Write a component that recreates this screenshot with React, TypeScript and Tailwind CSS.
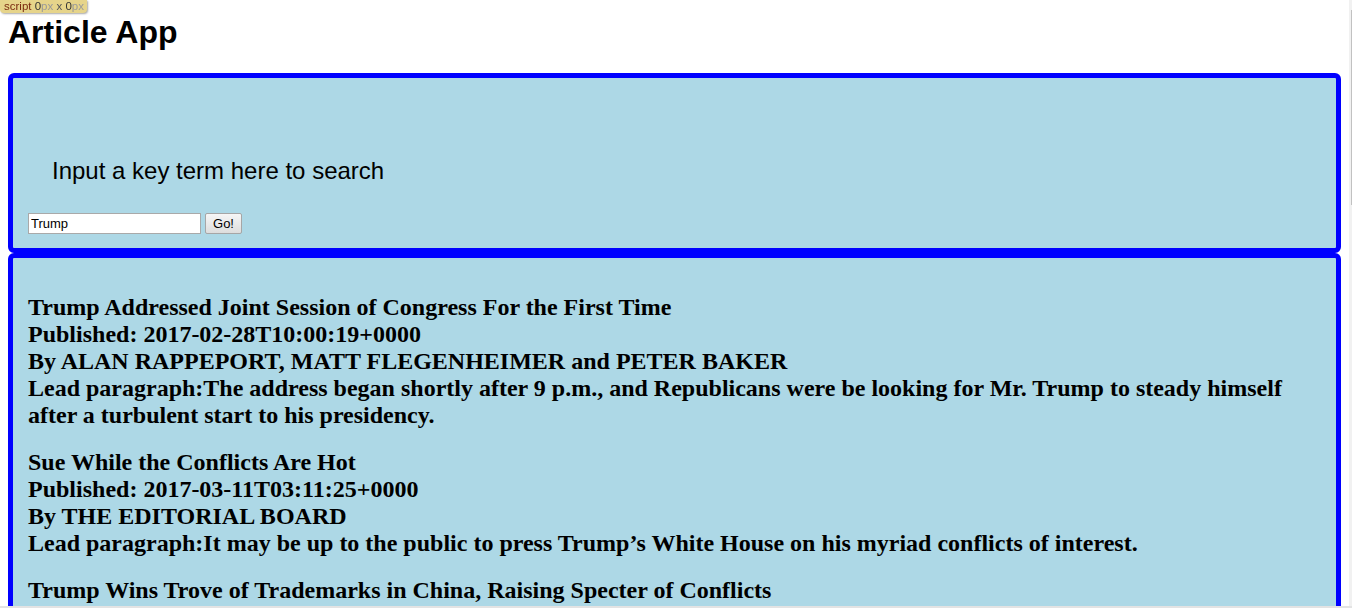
import React from "react";

const articles = [
  {
    title: "Trump Addressed Joint Session of Congress For the First Time",
    published: "2017-02-28T10:00:19+0000",
    by: "By ALAN RAPPEPORT, MATT FLEGENHEIMER and PETER BAKER",
    lead: "The address began shortly after 9 p.m., and Republicans were be looking for Mr. Trump to steady himself after a turbulent start to his presidency.",
  },
  {
    title: "Sue While the Conflicts Are Hot",
    published: "2017-03-11T03:11:25+0000",
    by: "By THE EDITORIAL BOARD",
    lead: "It may be up to the public to press Trump\u2019s White House on his myriad conflicts of interest.",
  },
  {
    title: "Trump Wins Trove of Trademarks in China, Raising Specter of Conflicts",
    published: "2017-03-08T22:07:18+0000",
    by: "By SUI-LEE WEE",
    lead: "The approval of 38 trademarks, including for escort services, adds to concerns that Beijing could use its regulatory power to gain leverage over the president.",
  },
];

export default function App() {
  return (
    <div className="min-h-[608px] bg-white pb-[8px]">
      {/* dev badge overlay */}
      <div className="fixed left-0 top-0 z-10 flex h-[13px] w-[87px] items-center rounded-b-[4px] bg-[#e6d48a] pl-[4px] text-[11.5px] leading-[13px] shadow-[1px_1px_2px_rgba(0,0,0,0.35)] font-['Liberation_Sans',Arial,sans-serif]">
        <span className="text-[#7a2a10]">script&nbsp;</span>
        <span className="text-[#333]">0</span>
        <span className="text-[#999]">px</span>
        <span className="text-[#555]">&nbsp;x&nbsp;</span>
        <span className="text-[#333]">0</span>
        <span className="text-[#999]">px</span>
      </div>
      {/* scrollbar strips */}
      <div className="fixed right-0 top-0 z-10 h-[608px] w-[3px] bg-[#f1f1f1]">
        <div className="ml-[2px] mt-[10px] h-[195px] w-[1px] bg-[#c1c1c1]" />
      </div>
      <div className="fixed bottom-0 left-0 z-10 h-[2px] w-[1352px] bg-[#e3e3e3]" />

      <div className="ml-[8px] w-[1333px]">
        <h1 className="pt-[14px] text-[32px] font-bold leading-[37px] text-black font-['Liberation_Sans',Arial,sans-serif]">
          Article App
        </h1>

        <div className="mt-[22px] h-[180px] rounded-[6px] border-[5px] border-[#0000ff] bg-[#add8e6] pl-[15px] pt-[79px]">
          <div className="pl-[24px] text-[24px] leading-[28px] text-black font-['Liberation_Sans',Arial,sans-serif]">
            Input a key term here to search
          </div>
          <div className="mt-[28px] flex items-start gap-[4px] font-['Liberation_Sans',Arial,sans-serif]">
            <input
              type="text"
              defaultValue="Trump"
              className="h-[21px] w-[173px] border border-[#a9a9a9] bg-white px-[2px] text-[13px] leading-[19px] text-black outline-none"
            />
            <button className="h-[21px] w-[37px] rounded-[2px] border border-[#a6a6a6] bg-gradient-to-b from-[#f6f6f6] to-[#dddddd] text-[13px] leading-[19px] text-black">
              Go!
            </button>
          </div>
        </div>

        <div className="rounded-[6px] border-[5px] border-[#0000ff] bg-[#add8e6] px-[15px] pb-[24px] pt-[36px]">
          <div className="flex flex-col gap-[20px] text-[24px] font-bold leading-[27px] text-black font-['Liberation_Serif','Times_New_Roman',serif]">
            {articles.map((a) => (
              <div key={a.title}>
                <div>{a.title}</div>
                <div>Published: {a.published}</div>
                <div>{a.by}</div>
                <div>Lead paragraph:{a.lead}</div>
              </div>
            ))}
          </div>
        </div>
      </div>
    </div>
  );
}
